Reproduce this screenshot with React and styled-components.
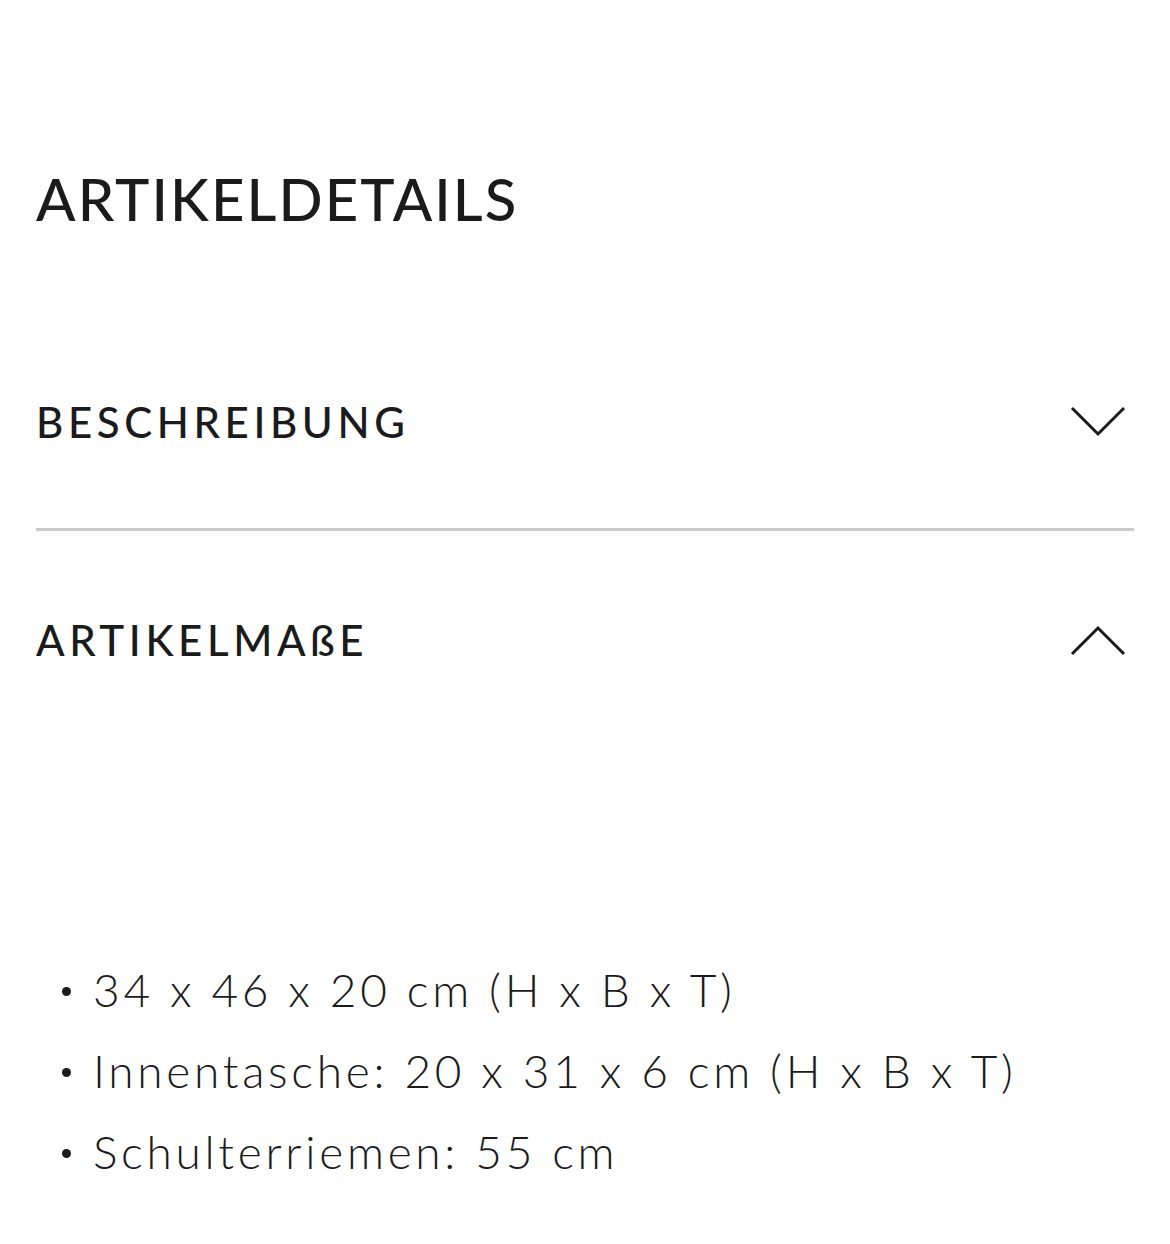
import * as React from 'react'
import styled, { createGlobalStyle } from 'styled-components'

const GlobalStyle = createGlobalStyle`
  html, body {
    margin: 0;
    padding: 0;
    background: #fff;
  }
  body {
    font-family: Lato, "Open Sans", sans-serif;
    color: #1b1b1b;
  }
`

const Page = styled.div`
  width: 1170px;
  min-height: 1244px;
  padding: 0 36px;
  box-sizing: border-box;
`

const Title = styled.h1`
  margin: 0;
  padding-top: 164px;
  font-size: 58px;
  font-weight: 500;
  line-height: 70px;
  letter-spacing: 2.1px;
`

const Section = styled.section`
  border-bottom: ${({ $divider }) => ($divider ? '3px solid #cacaca' : 'none')};
`

const SectionHeader = styled.div`
  display: flex;
  align-items: center;
  justify-content: space-between;
  height: ${({ $height }) => $height}px;
  margin-top: ${({ $offset = 0 }) => $offset}px;
`

const SectionTitle = styled.h2`
  margin: 0;
  font-size: 42px;
  font-weight: 500;
  letter-spacing: 4.6px;
`

const Chevron = styled.svg`
  width: 56px;
  height: 32px;
  margin-right: 8px;
`

const List = styled.ul`
  margin: 0;
  padding: 200px 0 0 22px;
  list-style: none;
`

const Item = styled.li`
  display: flex;
  align-items: center;
  height: 81px;
  font-size: 46px;
  font-weight: 300;
  letter-spacing: 3.7px;

  &::before {
    content: '';
    width: 9px;
    height: 9px;
    border-radius: 50%;
    background: #1b1b1b;
    margin: 4px 22px 0 4px;
  }
`

const ChevronIcon = ({ up }) => (
  <Chevron viewBox="0 0 56 32" fill="none" stroke="#1b1b1b" strokeWidth="3">
    <polyline points={up ? '2,30 28,4 54,30' : '2,2 28,28 54,2'} />
  </Chevron>
)

export default function App() {
  return (
    <Page>
      <GlobalStyle />
      <Title>ARTIKELDETAILS</Title>

      <Section $divider>
        <SectionHeader $height={212} $offset={82}>
          <SectionTitle>BESCHREIBUNG</SectionTitle>
          <ChevronIcon />
        </SectionHeader>
      </Section>

      <Section>
        <SectionHeader $height={218}>
          <SectionTitle>ARTIKELMAßE</SectionTitle>
          <ChevronIcon up />
        </SectionHeader>
        <List>
          <Item>34 x 46 x 20 cm (H x B x T)</Item>
          <Item>Innentasche: 20 x 31 x 6 cm (H x B x T)</Item>
          <Item>Schulterriemen: 55 cm</Item>
        </List>
      </Section>
    </Page>
  )
}
